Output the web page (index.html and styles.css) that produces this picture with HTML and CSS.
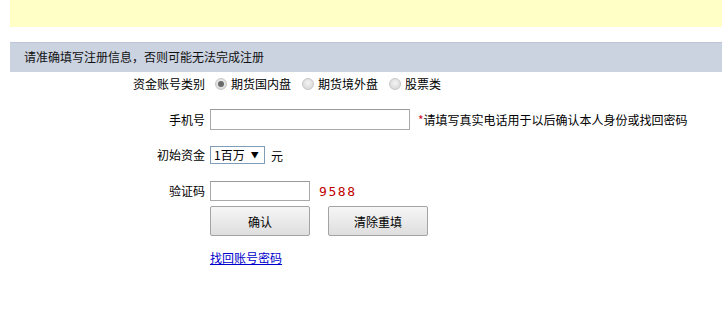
FILE: index.html
```html
<!DOCTYPE html>
<html lang="zh-CN">
<head>
<meta charset="utf-8">
<title>注册</title>
<link rel="stylesheet" href="styles.css">
</head>
<body>
<div class="page">
  <div class="notice"></div>
  <div class="bar">请准确填写注册信息，否则可能无法完成注册</div>
  <form class="form">
    <div class="row row-type">
      <label class="label">资金账号类别</label>
      <div class="field radios">
        <label class="radio"><input type="radio" name="t" checked><span>期货国内盘</span></label>
        <label class="radio"><input type="radio" name="t"><span>期货境外盘</span></label>
        <label class="radio"><input type="radio" name="t"><span>股票类</span></label>
      </div>
    </div>
    <div class="row row-phone">
      <label class="label">手机号</label>
      <div class="field">
        <input class="text text-wide" type="text">
        <span class="hint"><span class="star">*</span>请填写真实电话用于以后确认本人身份或找回密码</span>
      </div>
    </div>
    <div class="row row-fund">
      <label class="label">初始资金</label>
      <div class="field">
        <div class="select"><span>1百万</span><span class="arrow">▼</span></div>
        <span class="unit">元</span>
      </div>
    </div>
    <div class="row row-code">
      <label class="label">验证码</label>
      <div class="field">
        <input class="text text-short" type="text">
        <span class="captcha">9588</span>
      </div>
    </div>
    <div class="row row-buttons">
      <span class="label"></span>
      <div class="field buttons">
        <button type="button" class="btn">确认</button>
        <button type="button" class="btn">清除重填</button>
      </div>
    </div>
    <div class="row row-link">
      <span class="label"></span>
      <div class="field"><a class="link" href="#">找回账号密码</a></div>
    </div>
  </form>
</div>
</body>
</html>
```

FILE: styles.css
```css
* { box-sizing: border-box; }
html, body { margin: 0; padding: 0; background: #fff; }
body {
  font-family: "Noto Sans CJK SC", "DejaVu Sans", sans-serif;
  font-size: 12px;
  color: #000;
}
.page { margin-left: 10px; }
.notice {
  height: 27px;
  background: #ffffc6;
}
.bar {
  margin-top: 15px;
  height: 30px;
  background: #cbd2e0;
  border-top: 1px solid #bcc5d6;
  padding-left: 14px;
  line-height: 28px;
  font-size: 12px;
  color: #111;
}
.form { display: flex; flex-direction: column; }
.row {
  display: grid;
  grid-template-columns: 195px 1fr;
  column-gap: 5px;
  align-items: center;
}
.label { text-align: right; line-height: 16px; }
.field { display: flex; align-items: center; }
.row-type { height: 24px; }
.row-phone { margin-top: 13px; height: 21px; }
.row-fund { margin-top: 16px; height: 18px; }
.row-code { margin-top: 17px; height: 20px; }
.row-buttons { margin-top: 5px; height: 30px; }
.row-link { margin-top: 14px; height: 16px; }

.radios { gap: 0; padding-left: 5px; }
.radio { display: flex; align-items: center; margin-right: 11px; line-height: 16px; }
.radio input {
  appearance: none;
  -webkit-appearance: none;
  width: 12px;
  height: 12px;
  margin: 0 4px 0 0;
  border-radius: 50%;
  border: 1px solid #c8c8c8;
  background: radial-gradient(circle at 50% 40%, #f4f4f4 0%, #dcdcdc 70%, #cfcfcf 100%);
  position: relative;
}
.radio input:checked::after {
  content: "";
  position: absolute;
  left: 2px; top: 2px;
  width: 6px; height: 6px;
  border-radius: 50%;
  background: #6a6a6a;
}

.text {
  height: 21px;
  border: 1px solid #a9a9a9;
  border-top-color: #9a9a9a;
  padding: 0 3px;
  margin: 0;
  font: inherit;
  background: #fff;
}
.text-wide { width: 200px; }
.text-short { width: 100px; height: 20px; }
.hint { margin-left: 8px; line-height: 16px; }
.star { color: #c8102e; }

.select {
  width: 55px;
  height: 18px;
  border: 1px solid #7f9db9;
  display: flex;
  align-items: center;
  padding-left: 3px;
  line-height: 16px;
}
.select .arrow { font-size: 8px; margin-left: 6px; }
.unit { margin-left: 6px; }

.captcha {
  margin-left: 9px;
  color: #c00000;
  font-family: "DejaVu Sans Mono", "Liberation Mono", monospace;
  font-size: 13px;
  letter-spacing: 1.6px;
}

.buttons { gap: 18px; }
.btn {
  width: 100px;
  height: 30px;
  margin: 0;
  border: 1px solid #a3a3a3;
  border-radius: 2px;
  background: linear-gradient(#f6f6f6, #dedede);
  font: inherit;
  color: #000;
  padding: 0;
}

.link { color: #0000cc; text-decoration: underline; line-height: 16px; }
```
